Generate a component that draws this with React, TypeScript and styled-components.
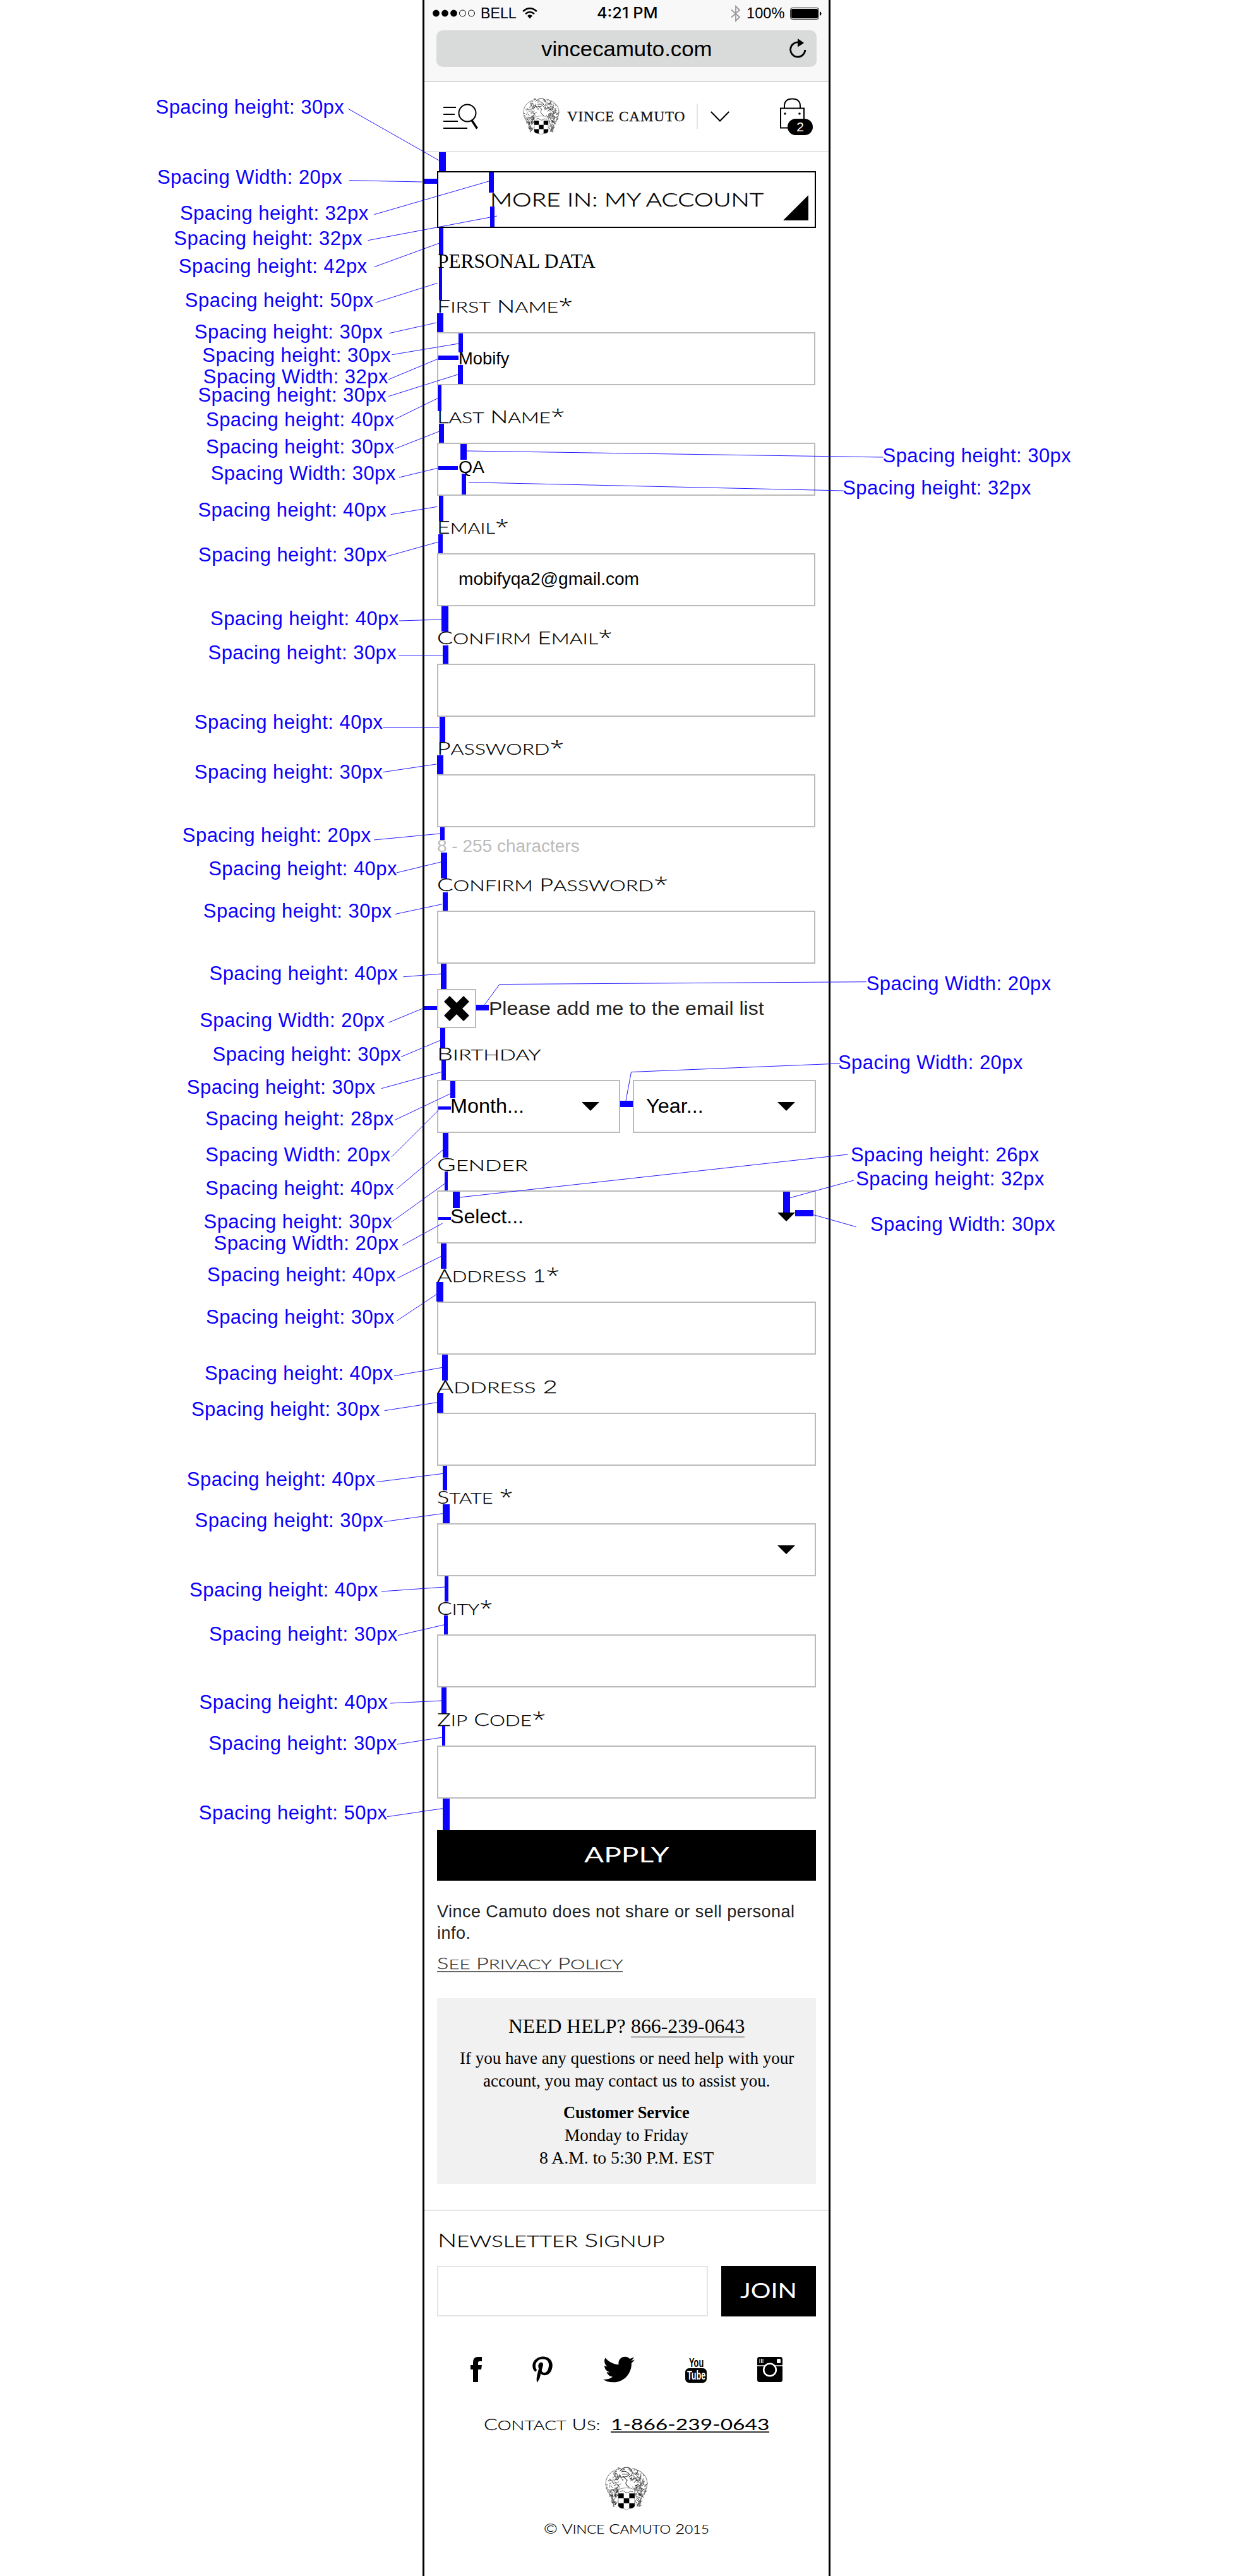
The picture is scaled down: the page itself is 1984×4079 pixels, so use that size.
import React, { useLayoutEffect, useRef, useState } from "react";
import styled, { createGlobalStyle } from "styled-components";
import { FaPinterestP, FaTwitter } from "react-icons/fa";

const SANS = `"Liberation Sans", Arial, sans-serif`;
const SERIF = `"Liberation Serif", "Times New Roman", serif`;
const WIDE = `Lato, "Open Sans", sans-serif`;
const BLUE = "#0c00ff";

const GlobalStyle = createGlobalStyle`
  *, *::before, *::after { box-sizing: border-box; }
  body { margin: 0; background: #fff; color: #000; font-family: ${SANS}; }
`;

/* ---------- text that is set to a fixed measure ---------- */

const FitBox = styled.span<{ $w: number }>`
  display: inline-block;
  width: ${(p) => p.$w}px;
  white-space: nowrap;
  text-align: left;
`;
const FitInner = styled.span`
  display: inline-block;
  transform-origin: 0 50%;
`;

function Fit({ w, children }: { w: number; children: React.ReactNode }) {
  const ref = useRef<HTMLSpanElement>(null);
  const [scale, setScale] = useState(1);
  useLayoutEffect(() => {
    if (ref.current && ref.current.offsetWidth) setScale(w / ref.current.offsetWidth);
  }, [w]);
  return (
    <FitBox $w={w}>
      <FitInner ref={ref} style={{ transform: `scaleX(${scale})` }}>
        {children}
      </FitInner>
    </FitBox>
  );
}

const CapWord = styled.span`
  display: inline-block;
  text-transform: uppercase;
  font-size: 0.86em;
  -webkit-text-stroke: 0.25px currentColor;
  &::first-letter {
    font-size: 1.163em;
  }
`;
const Star = styled.span`
  display: inline-block;
  font: 300 1.12em/1px "Open Sans", ${WIDE};
`;

function SmallCaps({ text }: { text: string }) {
  const starred = text.endsWith("*");
  const body = starred ? text.slice(0, -1) : text;
  return (
    <>
      {body.split(" ").map((word, i) => (
        <React.Fragment key={i}>
          {i > 0 && " "}
          {word && <CapWord>{word}</CapWord>}
        </React.Fragment>
      ))}
      {starred && <Star>*</Star>}
    </>
  );
}

/* ---------- phone frame and browser chrome ---------- */

const Page = styled.div`
  position: relative;
  display: flex;
  justify-content: center;
  width: 1984px;
  height: 4079px;
  overflow: hidden;
`;
const Phone = styled.div`
  display: flex;
  flex-direction: column;
  width: 646px;
  height: 4079px;
  border: solid #000;
  border-width: 0 3px;
  background: #fff;
`;
const Chrome = styled.div`
  height: 129px;
  background: #f8f8f8;
  border-bottom: 1px solid #aaa;
  padding: 0 19px;
`;
const StatusBar = styled.div`
  display: flex;
  align-items: center;
  justify-content: space-between;
  height: 42px;
  margin: 0 -8px 6px -6px;
  font: 24px/42px ${SANS};
`;
const StatusGroup = styled.div<{ $w?: number; $end?: boolean }>`
  display: flex;
  align-items: center;
  gap: 9px;
  width: ${(p) => (p.$w ? `${p.$w}px` : "auto")};
  justify-content: ${(p) => (p.$end ? "flex-end" : "flex-start")};
`;
const Clock = styled.div`
  font: 500 24px/42px Inter, ${SANS};
`;
const UrlBar = styled.div`
  display: flex;
  align-items: center;
  height: 58px;
  border-radius: 10px;
  background: #d9dbda;
  padding: 0 16px 0 166px;
  justify-content: space-between;
  font: 34px/58px ${SANS};
`;

/* ---------- site header ---------- */

const Header = styled.header`
  display: flex;
  align-items: center;
  height: 112px;
  border-bottom: 2px solid #e4e4e4;
  padding: 0 25px 0 30px;
`;
const Brand = styled.div`
  display: flex;
  align-items: center;
  margin-left: 70px;
  font: 500 23px/30px ${SERIF};
  letter-spacing: 1px;
  color: #111;
  -webkit-text-stroke: 0.3px #111;
`;
const BrandName = styled.div`
  margin: 1px 0 0 12px;
`;
const Divider = styled.div`
  width: 2px;
  height: 40px;
  margin: 0 20px 0 18px;
  background: #e4e4e4;
`;
const Bag = styled.div`
  position: relative;
  width: 52px;
  height: 60px;
  margin-left: auto;
`;
const BagCount = styled.div`
  position: absolute;
  right: 0;
  bottom: 0;
  width: 40px;
  height: 26px;
  border-radius: 13px;
  background: #000;
  color: #fff;
  text-align: center;
  font: 21px/26px ${SANS};
`;

/* ---------- form ---------- */

const Content = styled.main`
  display: flex;
  flex-direction: column;
  padding: 30px 20px 0;
`;
const MoreIn = styled.div`
  display: flex;
  justify-content: space-between;
  align-items: center;
  height: 90px;
  border: 2px solid #000;
  padding: 0 10px 0 82px;
  font: 300 29px/30px ${WIDE};
  -webkit-text-stroke: 0.45px #000;
  svg {
    align-self: flex-end;
    margin-bottom: 10px;
  }
`;
const SectionTitle = styled.h1`
  margin: 42px 0 0 1px;
  height: 21px;
  font: 400 32px/21px ${SERIF};
`;
const Label = styled.label<{ $mt?: number }>`
  display: block;
  margin-top: ${(p) => p.$mt ?? 41}px;
  height: 20px;
  font: 300 27.5px/18px ${WIDE};
`;
const FieldBox = styled.div<{ $w?: number; $pl?: number; $raise?: number }>`
  display: flex;
  align-items: center;
  justify-content: space-between;
  width: ${(p) => p.$w ?? 600}px;
  height: 84px;
  border: 2px solid #bbb;
  padding: 0 31px ${(p) => p.$raise ?? 0}px ${(p) => p.$pl ?? 32}px;
  font: 27px/30px ${SANS};
`;
const Row = styled.div<{ $mt: number; $gap?: number }>`
  display: flex;
  align-items: center;
  gap: ${(p) => p.$gap ?? 20}px;
  margin-top: ${(p) => p.$mt}px;
`;
const Below = styled.div`
  margin-top: 30px;
`;
const SelectText = styled.span`
  font-size: 31px;
`;
const Hint = styled.div`
  margin-top: 20px;
  height: 20px;
  color: #bbb;
  font: 28px/20px ${SANS};
`;
const Checkbox = styled.div`
  display: flex;
  align-items: center;
  justify-content: center;
  width: 62px;
  height: 62px;
  border: 2px solid #bbb;
`;
const CheckLabel = styled.span`
  font: 30px/30px ${SANS};
  color: #222;
`;
const BlackButton = styled.button<{ $w: number; $mt?: number }>`
  width: ${(p) => p.$w}px;
  height: 80px;
  margin: ${(p) => p.$mt ?? 0}px 0 0;
  padding: 0 0 4px;
  border: 0;
  background: #000;
  color: #fff;
  text-align: center;
  font: 400 33px/40px ${WIDE};
`;
const Privacy = styled.p`
  margin: 33px 0 0;
  color: #222;
  font: 27px/33.5px ${SANS};
  letter-spacing: 0.47px;
`;
const PolicyLink = styled.a`
  align-self: flex-start;
  margin-top: 17px;
  height: 28px;
  border-bottom: 2px solid #666;
  color: #333;
  font: 300 25px/26px ${WIDE};
`;
const Help = styled.section`
  display: flex;
  flex-direction: column;
  align-items: center;
  height: 294px;
  margin-top: 41px;
  padding-top: 26px;
  background: #f1f1f1;
  font: 28px/36px ${SERIF};
`;
const HelpTitle = styled.div`
  display: flex;
  gap: 8px;
  font-size: 32px;
  margin-bottom: 15px;
`;
const HelpPhone = styled.a`
  border-bottom: 1px solid #000;
  height: 36px;
`;
const Gap = styled.div`
  height: 14px;
`;

/* ---------- footer ---------- */

const Footer = styled.footer`
  display: flex;
  flex-direction: column;
  align-items: center;
  margin-top: 41px;
  border-top: 2px solid #e4e4e4;
  padding: 37px 20px 0;
`;
const NewsTitle = styled.div`
  align-self: flex-start;
  margin-left: 1px;
  height: 20px;
  font: 300 28.5px/19px ${WIDE};
`;
const NewsInput = styled.div`
  width: 429px;
  height: 80px;
  border: 2px solid #e4e4e4;
`;
const Social = styled.div`
  display: grid;
  grid-template-columns: 98px 112px 130px 114px 40px;
  align-items: center;
  justify-items: start;
  height: 42px;
  margin-top: 59px;
`;
const Pinterest = styled(FaPinterestP)`
  width: 32px;
  height: 42px;
`;
const YouTube = styled.div`
  display: flex;
  flex-direction: column;
  align-items: center;
  width: 34px;
  font: bold 20px/18px ${SANS};
`;
const Tube = styled.div`
  height: 23px;
  width: 34px;
  border-radius: 6px;
  background: #000;
  color: #fff;
  text-align: center;
  line-height: 23px;
`;
const Contact = styled.div`
  display: flex;
  align-items: flex-start;
  gap: 16px;
  height: 28px;
  margin-top: 55px;
  font: 300 25px/28px ${WIDE};
`;
const ContactPhone = styled.a`
  height: 28px;
  border-bottom: 2px solid #333;
  font-weight: 400;
`;
const FootMark = styled.div`
  height: 71px;
  margin: 53px 0 16px;
`;
const Copyright = styled.div`
  font: 300 22px/24px ${WIDE};
`;

/* ---------- drawings ---------- */

function Emblem({ w, h }: { w: number; h: number }) {
  let seed = 7;
  const rnd = () => {
    seed = (seed * 16807) % 2147483647;
    return seed / 2147483647;
  };
  const curl = (x: number, y: number, s: number) => {
    const d = () => ((rnd() - 0.5) * s).toFixed(1);
    return `M${x.toFixed(1)} ${y.toFixed(1)}q${d()} ${d()} ${d()} ${d()}`;
  };
  const leaves: string[] = [];
  for (let i = 0; i < 230; i++) {
    const a = rnd() * Math.PI * 1.5 + Math.PI * 0.75;
    const r = 10 + rnd() * 17;
    leaves.push(curl(29 + Math.cos(a) * r, 28 + Math.sin(a) * r, 7));
  }
  for (let i = 0; i < 80; i++) {
    const side = i % 2 ? 1 : -1;
    const y = 30 + rnd() * 23;
    leaves.push(curl(29 + side * (13 + rnd() * (14 - (y - 30) * 0.4)), y, 6));
  }
  return (
    <svg width={w} height={h} viewBox="0 0 58 60" preserveAspectRatio="none" fill="none">
      <path d={leaves.join("")} stroke="#222" strokeWidth=".6" />
      <path
        d="M9 8Q1 14 1 24Q2 35 8 40L12 55M49 8Q57 14 57 24Q56 35 50 40L46 55M21 3L17 4L9 8M37 3L41 4L49 8"
        stroke="#555"
        strokeWidth=".7"
      />
      <path d="M22 9Q24 4 32 5Q38 10 33 18L36 26L30 31L22 26L25 18Z" fill="#fff" />
      <path d="M20 7Q27-2 35 4Q40 11 32 15M22 8Q28 5 33 11Q29 16 24 14L30 19Q25 24 33 29M23 11H31" stroke="#333" strokeWidth=".9" />
      <path d="M18 32Q29 27 40 32V54Q38 58 32 57.500L29 60L26 57.500Q20 58 18 54Z" fill="#fff" stroke="#666" strokeWidth=".6" />
      <path d="M20 35Q24 32 27 35T34 34L38 35" stroke="#444" strokeWidth=".8" />
      <path d="M18 37H25.300V43.700H18ZM32.700 37H40V43.700H32.700ZM25.300 43.700H32.700V50.400H25.300ZM18 50.400H25.300V57.200Q19 57.500 18 54ZM32.700 50.400H40V54Q39 57.500 32.700 57.200Z" fill="#000" />
    </svg>
  );
}

const Caret = () => (
  <svg width="28" height="14" viewBox="0 0 28 14">
    <path d="M0 0H28L14 14Z" />
  </svg>
);

/* ---------- spacing annotations ---------- */

const Overlay = styled.div`
  position: absolute;
  inset: 0;
  pointer-events: none;
`;
const OverlayArt = styled.svg`
  position: absolute;
  inset: 0;
`;
const Note = styled.span<{ $x: number; $y: number }>`
  position: absolute;
  left: ${(p) => p.$x - 1.5}px;
  top: ${(p) => p.$y - 29}px;
  color: ${BLUE};
  font: 31px/36px ${SANS};
  letter-spacing: 0.46px;
  white-space: nowrap;
`;

type NoteRow = [kind: "h" | "W", size: number, x: number, baseline: number, line: string];
const notes: NoteRow[] = [
  ["h", 30, 248, 180.7, "551.4,172.3 695,254"],
  ["W", 20, 250.4, 291.7, "553,285.7 668,288"],
  ["h", 32, 286.4, 348.7, "592.5,339.7 774,287"],
  ["h", 32, 276.8, 389, "582.5,380.7 787,342"],
  ["h", 42, 284.3, 433, "592.5,422.7 695,385.3"],
  ["h", 50, 294.3, 486.7, "594.3,479.3 692.5,448.3"],
  ["h", 30, 309.3, 536.7, "616.4,527.7 690.7,511"],
  ["h", 30, 321.8, 573.7, "620.4,561.7 726.4,544"],
  ["W", 32, 323.3, 608, "615,601 694,568"],
  ["h", 30, 314.9, 637, "615,627.7 725,593"],
  ["h", 40, 327.5, 676, "625,664 693,630.7"],
  ["h", 30, 327.5, 719, "625,710.7 695,683.3"],
  ["W", 30, 335.2, 761, "632,756 693,741.3"],
  ["h", 40, 314.9, 818.7, "618.6,814.7 692.3,802.3"],
  ["h", 30, 315.6, 890, "612.3,881 693.7,858.3"],
  ["h", 40, 334.5, 990.7, "632,983 699.3,981"],
  ["h", 30, 331, 1044.7, "631.3,1038.5 701.4,1038.5"],
  ["h", 40, 309.3, 1154.7, "606.7,1151.5 695,1151.5"],
  ["h", 30, 309.3, 1233.7, "606,1222.7 691,1210"],
  ["h", 20, 290.3, 1333.7, "592,1330 697,1320"],
  ["h", 40, 331.7, 1386.7, "627.8,1382 698,1365"],
  ["h", 30, 323.3, 1453.7, "625,1447.7 700,1431.7"],
  ["h", 40, 333, 1552.9, "638.3,1546.8 698.6,1542"],
  ["W", 20, 317.7, 1626.8, "615,1619.3 670.5,1596.4"],
  ["h", 30, 338, 1681.4, "634.8,1673.6 698,1647"],
  ["h", 30, 297.3, 1733, "604,1723.6 698.6,1697.5"],
  ["h", 28, 326.8, 1782.9, "625,1773.6 714,1731.4"],
  ["W", 20, 326.8, 1840.4, "620,1832 694.4,1757.9"],
  ["h", 40, 326.8, 1892.9, "627.8,1882.9 701.4,1820.7"],
  ["h", 30, 324, 1946.4, "619.3,1935.4 704.2,1874.3"],
  ["W", 20, 340, 1979.6, "637,1972 700.7,1937"],
  ["h", 40, 329.6, 2029.6, "629,2024 698.6,1989.3"],
  ["h", 30, 327.5, 2097, "627.8,2091.7 691.6,2049.3"],
  ["h", 40, 325.4, 2185.7, "624,2178.7 700.7,2165.3"],
  ["h", 30, 304.4, 2242.7, "608.8,2233.7 692.3,2220.7"],
  ["h", 40, 297.3, 2353.7, "595.5,2346.7 702,2333.3"],
  ["h", 30, 310, 2418.7, "607.4,2409.7 700.7,2396.7"],
  ["h", 40, 301.6, 2529, "604,2520 704.2,2513"],
  ["h", 30, 332.4, 2599, "630,2589.7 703.5,2572.7"],
  ["h", 40, 317, 2707, "618,2697 700,2693"],
  ["h", 30, 331.7, 2772, "629,2762 700.7,2751"],
  ["h", 50, 316.3, 2882, "613,2876.7 700.7,2863.7"],
  ["h", 30, 1399, 733.3, "739.3,714 1398.3,724"],
  ["h", 32, 1335.7, 783.7, "742,763.7 1335.7,777"],
  ["W", 20, 1373.2, 1569, "1371.8,1554.7 791,1558.6 767.4,1590.7"],
  ["W", 20, 1328.4, 1694, "1330,1684 999.5,1697.5 991,1742.9"],
  ["h", 26, 1348.4, 1840, "1342.6,1828 727.4,1896"],
  ["h", 32, 1356.7, 1877.7, "1351.9,1869 1251,1896.7"],
  ["W", 30, 1379.4, 1950, "1355.7,1942.7 1288.5,1923.7"],
];

const bars: [number, number, number, number][] = [
  [695, 241, 11, 30], [672, 283, 20, 8], [774, 273, 8, 32], [776, 327, 7, 32],
  [695, 361, 7, 42], [695, 424, 5, 51], [692, 496, 10, 30], [726, 528, 7, 30],
  [694, 563, 32, 7], [725, 578, 8, 30], [693, 610, 6, 41], [695, 671, 8, 30],
  [729, 703, 10, 25], [694, 738, 31, 6], [731, 750, 7, 33], [695, 785, 7, 40],
  [694, 846, 7, 30], [699, 960, 11, 40], [701, 1022, 9, 29], [696, 1135, 9, 40],
  [692, 1196, 10, 30], [697, 1310, 7, 20], [698, 1350, 10, 41], [701, 1413, 8, 29],
  [698, 1526, 9, 40], [672, 1593, 20, 6], [754, 1591, 20, 9], [697, 1628, 8, 31],
  [699, 1679, 7, 31], [713, 1712, 8, 27], [694, 1752, 20, 5], [982, 1743, 20, 10],
  [701, 1794, 9, 39], [704, 1855, 5, 30], [717, 1887, 11, 26], [694, 1927, 20, 5],
  [1240, 1887, 11, 33], [1259, 1916, 29, 10], [698, 1969, 9, 40], [691, 2030, 11, 31],
  [700, 2145, 9, 41], [692, 2206, 10, 31], [701, 2321, 7, 39], [701, 2382, 11, 30],
  [704, 2496, 6, 40], [703, 2558, 6, 30], [699, 2672, 8, 41], [700, 2733, 5, 31],
  [701, 2848, 11, 50],
];

function Annotations() {
  return (
    <Overlay>
      <OverlayArt width="1984" height="4079">
        {bars.map(([x, y, w, h], i) => (
          <rect key={i} x={x} y={y} width={w} height={h} fill={BLUE} shapeRendering="crispEdges" />
        ))}
        {notes.map(([, , , , line], i) => (
          <polyline key={i} points={line} fill="none" stroke={BLUE} strokeWidth="1" strokeOpacity=".9" />
        ))}
      </OverlayArt>
      {notes.map(([kind, size, x, y], i) => (
        <Note key={i} $x={x} $y={y}>
          {`Spacing ${kind === "h" ? "height" : "Width"}: ${size}px`}
        </Note>
      ))}
    </Overlay>
  );
}

/* ---------- form fields ---------- */

type FieldProps = {
  label: string;
  lw: number;
  mt?: number;
  w?: number;
  pl?: number;
  raise?: number;
  caret?: boolean;
  children?: React.ReactNode;
};

function Field({ label, lw, mt, w, pl, raise, caret, children }: FieldProps) {
  return (
    <>
      <Label $mt={mt}>
        <Fit w={lw}>
          <SmallCaps text={label} />
        </Fit>
      </Label>
      <Below>
        <FieldBox $w={w} $pl={pl} $raise={raise}>
          <span>{children}</span>
          {caret && <Caret />}
        </FieldBox>
      </Below>
    </>
  );
}

export default function App() {
  return (
    <Page>
      <GlobalStyle />
      <Phone>
        <Chrome>
          <StatusBar>
            <StatusGroup $w={258}>
              <svg width="67" height="12" viewBox="0 0 67 12">
                <g>
                  <circle cx="5.500" cy="6" r="5.400" />
                  <circle cx="19.500" cy="6" r="5.400" />
                  <circle cx="33.500" cy="6" r="5.400" />
                </g>
                <g fill="none" stroke="#000" strokeWidth="1">
                  <circle cx="47.500" cy="6" r="5" />
                  <circle cx="61.500" cy="6" r="5" />
                </g>
              </svg>
              <Fit w={57}>BELL</Fit>
              <svg width="24" height="18" viewBox="0 0 24 18" fill="none" stroke="#000" strokeWidth="2.600">
                <path d="M1.200 6Q12-3.500 22.800 6M5 10Q12 4 19 10" />
                <path d="M8 13Q12 9.500 16 13L12 17.500Z" fill="#000" stroke="none" />
              </svg>
            </StatusGroup>
            <Clock>
              <Fit w={96}>4:21 PM</Fit>
            </Clock>
            <StatusGroup $w={258} $end>
              <svg width="16" height="27" viewBox="0 0 16 27" fill="none" stroke="#999" strokeWidth="1.800">
                <path d="M1 7.500L14 19L8 25V2L14 8L1 19.500" />
              </svg>
              <Fit w={60}>100%</Fit>
              <svg width="50" height="19" viewBox="0 0 50 19">
                <rect x=".6" y=".6" width="44.800" height="17.800" rx="3" fill="none" stroke="#000" />
                <rect x="2" y="2" width="42" height="15" rx="2" />
                <path d="M47 6Q49.500 7 49.500 9.500T47 13Z" />
              </svg>
            </StatusGroup>
          </StatusBar>
          <UrlBar>
            <Fit w={271}>vincecamuto.com</Fit>
            <svg width="28" height="32" viewBox="0 0 28 32">
              <path d="M15.500 6A11.600 11.600 0 1 0 25.800 18" fill="none" stroke="#000" strokeWidth="2.800" />
              <path d="M14 0L24 7L14 13.500Z" />
            </svg>
          </UrlBar>
        </Chrome>

        <Header>
          <svg width="56" height="42" viewBox="0 0 56 42" fill="none" stroke="#000" strokeWidth="2">
            <path d="M0 7H20M0 18H18M0 29H23M0 40H38" />
            <ellipse cx="38" cy="16" rx="13.500" ry="13.500" />
            <path d="M45 27.500L53.500 40.500" strokeWidth="3.400" />
          </svg>
          <Brand>
            <Emblem w={58} h={60} />
            <BrandName>
              <Fit w={187}>VINCE CAMUTO</Fit>
            </BrandName>
          </Brand>
          <Divider />
          <svg width="30" height="17" viewBox="0 0 30 17" fill="none" stroke="#000" strokeWidth="2">
            <path d="M.8 1L15 15.500L29.200 1" />
          </svg>
          <Bag>
            <svg width="40" height="50" viewBox="0 0 40 50" fill="none" stroke="#000" strokeWidth="2">
              <path d="M1 17.500H38V48.500H1Z" />
              <path d="M7 17V14Q7 2.500 19.500 2.500T32 14V17" />
              <circle cx="8" cy="26" r=".8" />
              <circle cx="31" cy="26" r=".8" />
            </svg>
            <BagCount>2</BagCount>
          </Bag>
        </Header>

        <Content>
          <MoreIn>
            <Fit w={433}>MORE IN: MY ACCOUNT</Fit>
            <svg width="40" height="40" viewBox="0 0 40 40">
              <path d="M40 0V40H0Z" />
            </svg>
          </MoreIn>
          <SectionTitle>
            <Fit w={250}>PERSONAL DATA</Fit>
          </SectionTitle>
          <Field label="First Name*" lw={215} mt={52} w={599}>
            <Fit w={81}>Mobify</Fit>
          </Field>
          <Field label="Last Name*" lw={203} w={599} raise={6}>
            <Fit w={41}>QA</Fit>
          </Field>
          <Field label="Email*" lw={114} w={599} raise={3}>
            <Fit w={286}>mobifyqa2@gmail.com</Fit>
          </Field>
          <Field label="Confirm Email*" lw={278} w={599} />
          <Field label="Password*" lw={202} w={599} />
          <Hint>
            <Fit w={226}>8 - 255 characters</Fit>
          </Hint>
          <Field label="Confirm Password*" lw={367} mt={42} w={599} />
          <Row $mt={40}>
            <Checkbox>
              <svg width="40" height="40" viewBox="0 0 40 40">
                <path d="M9 0L20 11L31 0L40 9L29 20L40 31L31 40L20 29L9 40L0 31L11 20L0 9Z" />
              </svg>
            </Checkbox>
            <CheckLabel>
              <Fit w={436}>Please add me to the email list</Fit>
            </CheckLabel>
          </Row>
          <Label $mt={32}>
            <Fit w={164}>
              <SmallCaps text="Birthday" />
            </Fit>
          </Label>
          <Row $mt={30}>
            <FieldBox $w={290} $pl={19}>
              <SelectText>
                <Fit w={117}>Month...</Fit>
              </SelectText>
              <Caret />
            </FieldBox>
            <FieldBox $w={290} $pl={19}>
              <SelectText>
                <Fit w={91}>Year...</Fit>
              </SelectText>
              <Caret />
            </FieldBox>
          </Row>
          <Field label="Gender" lw={144} pl={19} caret>
            <SelectText>
              <Fit w={116}>Select...</Fit>
            </SelectText>
          </Field>
          <Field label="Address 1*" lw={195} mt={42} />
          <Field label="Address 2" lw={191} mt={42} />
          <Field label="State *" lw={120} caret />
          <Field label="City*" lw={88} mt={42} />
          <Field label="Zip Code*" lw={173} mt={42} />
          <BlackButton $w={600} $mt={50}>
            <Fit w={134}>APPLY</Fit>
          </BlackButton>
          <Privacy>Vince Camuto does not share or sell personal info.</Privacy>
          <PolicyLink>
            <Fit w={294}>
              <SmallCaps text="See Privacy Policy" />
            </Fit>
          </PolicyLink>
          <Help>
            <HelpTitle>
              <Fit w={186}>NEED HELP?</Fit>
              <HelpPhone>
                <Fit w={180}>866-239-0643</Fit>
              </HelpPhone>
            </HelpTitle>
            <Fit w={529}>If you have any questions or need help with your</Fit>
            <Fit w={454}>account, you may contact us to assist you.</Fit>
            <Gap />
            <b>
              <Fit w={200}>Customer Service</Fit>
            </b>
            <Fit w={196}>Monday to Friday</Fit>
            <Fit w={276}>8 A.M. to 5:30 P.M. EST</Fit>
          </Help>
        </Content>

        <Footer>
          <NewsTitle>
            <Fit w={360}>
              <SmallCaps text="Newsletter Signup" />
            </Fit>
          </NewsTitle>
          <Row $mt={30} $gap={21}>
            <NewsInput />
            <BlackButton $w={150}>
              <Fit w={90}>JOIN</Fit>
            </BlackButton>
          </Row>
          <Social>
            <svg width="18" height="40" viewBox="0 0 18 40">
              <path d="M4 40V20H0V13H4V9C4 3 7 0 12 0H18V7H14.500C12.500 7 12 8 12 9.500V13H18L17 20H12V40Z" />
            </svg>
            <Pinterest />
            <FaTwitter size={50} />
            <YouTube>
              <Fit w={23}>You</Fit>
              <Tube>
                <Fit w={29}>Tube</Fit>
              </Tube>
            </YouTube>
            <svg width="40" height="40" viewBox="0 0 40 40">
              <rect width="40" height="40" rx="4" />
              <path d="M0 14H40" stroke="#fff" strokeWidth="1.600" />
              <path d="M4 3V10M6.500 3V10M9 3V10" stroke="#fff" strokeWidth="1" />
              <rect x="31" y="3" width="6" height="7" rx="1.500" fill="#fff" />
              <circle cx="20" cy="20.500" r="9.800" stroke="#fff" strokeWidth="2.600" />
            </svg>
          </Social>
          <Contact>
            <Fit w={185}>
              <SmallCaps text="Contact Us:" />
            </Fit>
            <ContactPhone>
              <Fit w={251}>1-866-239-0643</Fit>
            </ContactPhone>
          </Contact>
          <FootMark>
            <Emblem w={68} h={70} />
          </FootMark>
          <Copyright>
            <Fit w={262}>
              <SmallCaps text="© Vince Camuto 2015" />
            </Fit>
          </Copyright>
        </Footer>
      </Phone>
      <Annotations />
    </Page>
  );
}
